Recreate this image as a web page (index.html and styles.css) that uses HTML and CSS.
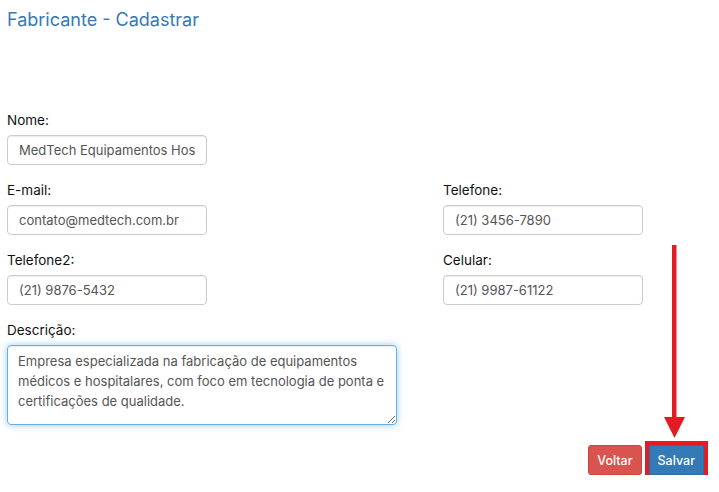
FILE: index.html
```html
<!DOCTYPE html>
<html lang="pt-BR">
<head>
<meta charset="utf-8">
<title>Fabricante - Cadastrar</title>
<link rel="stylesheet" href="styles.css">
</head>
<body>
<div class="page">
  <h1 class="title">Fabricante - Cadastrar</h1>
  <form class="form">
    <div class="grid">
      <div class="group">
        <label class="label">Nome:</label>
        <input class="control" type="text" value="MedTech Equipamentos Hospitalares">
      </div>
      <div></div>
      <div class="group">
        <label class="label">E-mail:</label>
        <input class="control" type="text" value="contato@medtech.com.br">
      </div>
      <div class="group">
        <label class="label">Telefone:</label>
        <input class="control" type="text" value="(21) 3456-7890">
      </div>
      <div class="group">
        <label class="label">Telefone2:</label>
        <input class="control" type="text" value="(21) 9876-5432">
      </div>
      <div class="group">
        <label class="label">Celular:</label>
        <input class="control" type="text" value="(21) 9987-61122">
      </div>
      <div class="group">
        <label class="label">Descrição:</label>
        <textarea class="control area focused">Empresa especializada na fabricação de equipamentos médicos e hospitalares, com foco em tecnologia de ponta e certificações de qualidade.</textarea>
      </div>
    </div>
    <div class="actions">
      <button type="button" class="btn btn-danger">Voltar</button>
      <button type="button" class="btn btn-primary highlighted">Salvar</button>
    </div>
  </form>
  <svg class="arrow" width="22" height="194" viewBox="0 0 22 194" aria-hidden="true">
    <rect x="8" y="0" width="4.5" height="176" fill="#e31b23"/>
    <polygon points="0,172 21,172 10.5,193" fill="#e31b23"/>
  </svg>
</div>
</body>
</html>
```

FILE: styles.css
```css
* { box-sizing: border-box; }
body {
  margin: 0;
  background: #fff;
  font-family: Inter, "Noto Sans", Arial, sans-serif;
  color: #222;
}
.page {
  position: relative;
  padding: 10px 15px 0 7px;
}
.title {
  margin: 0;
  font-size: 18px;
  line-height: 20px;
  font-weight: 400;
  color: #337ab7;
}
.form {
  margin-top: 80px;
}
.grid {
  display: grid;
  grid-template-columns: 436px 1fr;
  row-gap: 15px;
}
.group {
  display: flex;
  flex-direction: column;
  align-items: flex-start;
}
.label {
  font-size: 13.5px;
  line-height: 20px;
  margin-bottom: 5px;
  color: #111;
}
.control {
  width: 200px;
  height: 30px;
  padding: 4px 11px;
  border: 1px solid #ccc;
  border-radius: 4px;
  font-family: Inter, "Noto Sans", Arial, sans-serif;
  font-size: 13px;
  line-height: 20px;
  color: #555;
  background: #fff;
  box-shadow: inset 0 1px 1px rgba(0,0,0,.075);
  outline: none;
}
.area {
  width: 390px;
  height: 80px;
  padding: 5px 10px;
  resize: vertical;
}
.focused {
  border-color: #66afe9;
  box-shadow: inset 0 1px 1px rgba(0,0,0,.075), 0 0 7px rgba(102,175,233,.65);
}
.actions {
  display: flex;
  justify-content: flex-end;
  gap: 7px;
  margin-top: 20px;
}
.btn {
  height: 30px;
  padding: 0 8px;
  border: 1px solid transparent;
  border-radius: 3px;
  font-family: Inter, "Noto Sans", Arial, sans-serif;
  font-size: 12.5px;
  font-weight: 500;
  color: #fff;
  cursor: pointer;
}
.btn-danger {
  background: #d9534f;
  border-color: #d43f3a;
}
.btn-primary {
  background: #337ab7;
  border-color: #2e6da4;
}
.highlighted {
  outline: 4px solid #e31b23;
  outline-offset: 0;
  border-radius: 0;
}
.arrow {
  position: absolute;
  left: 664px;
  top: 245px;
}
```
